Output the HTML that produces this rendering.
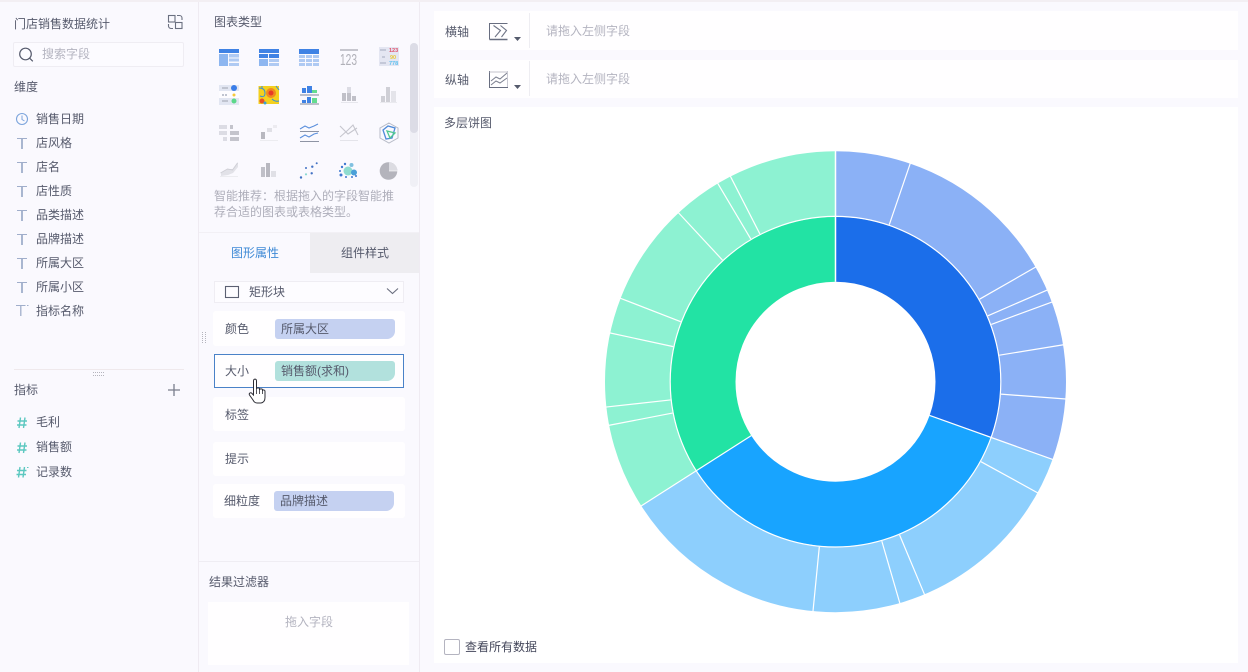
<!DOCTYPE html>
<html lang="zh"><head><meta charset="utf-8"><title>多层饼图</title>
<style>
html,body{margin:0;padding:0}
body{width:1248px;height:672px;position:relative;overflow:hidden;background:#faf9fe;font-family:"Liberation Sans","Noto Sans CJK SC",sans-serif;font-size:12px;color:#565a6c}
div{position:absolute;box-sizing:border-box}
.t{line-height:20px;height:20px;white-space:nowrap}
.w{background:#fffeff}
.g{color:#b4b4c0}
.p{border-radius:3px 3px 8px 3px;height:20px;line-height:20px;padding-left:6px;width:120px;color:#565a6c}
svg{position:absolute;left:0;top:0}
</style></head><body>
<div style="left:0;top:0;width:1248px;height:2px;background:#f3eff3"></div>
<div style="left:198px;top:2px;width:1px;height:670px;background:#efebf2"></div>
<div style="left:419px;top:2px;width:1px;height:670px;background:#efebf2"></div>
<div class="w" style="left:434px;top:11px;width:804px;height:39px"></div>
<div class="w" style="left:434px;top:60px;width:804px;height:38px"></div>
<div style="left:434px;top:107px;width:804px;height:556px;background:#fff"></div>
<div style="left:529px;top:13px;width:1px;height:35px;background:#eeedf2"></div>
<div style="left:529px;top:61px;width:1px;height:35px;background:#eeedf2"></div>
<div style="left:310px;top:233px;width:109px;height:40px;background:#eeedf1"></div>
<div style="left:199px;top:232px;width:220px;height:1px;background:#f2f0f5"></div>
<div style="left:13px;top:42px;width:171px;height:25px;border:1px solid #efedf3;border-radius:2px;background:#fcfbff"></div>
<div style="left:214px;top:281px;width:190px;height:22px;border:1px solid #efedf3;background:#fdfcff"></div>
<div class="w" style="left:213px;top:311px;width:192px;height:35px;border-radius:3px"></div>
<div class="w" style="left:214px;top:354px;width:190px;height:34px;border:1px solid #4a82c8"></div>
<div class="w" style="left:213px;top:397px;width:192px;height:34px;border-radius:3px"></div>
<div class="w" style="left:213px;top:442px;width:192px;height:34px;border-radius:3px"></div>
<div class="w" style="left:213px;top:484px;width:192px;height:34px;border-radius:3px"></div>
<div style="left:199px;top:561px;width:220px;height:1px;background:#efedf3"></div>
<div class="w" style="left:208px;top:602px;width:201px;height:63px"></div>
<div style="left:14px;top:369px;width:170px;height:1px;background:#efe9ec"></div>
<div style="left:410px;top:43px;width:8px;height:144px;border-radius:4px;background:#f0f0f6"></div>
<div style="left:410px;top:43px;width:8px;height:90px;border-radius:4px;background:#dcdce6"></div>

<div class="t" style="left:14px;top:14px">门店销售数据统计</div>
<div class="t g" style="left:42px;top:44px">搜索字段</div>
<div class="t" style="left:14px;top:77px">维度</div>
<div class="t" style="left:36px;top:109px">销售日期</div>
<div class="t" style="left:36px;top:133px">店风格</div>
<div class="t" style="left:36px;top:157px">店名</div>
<div class="t" style="left:36px;top:181px">店性质</div>
<div class="t" style="left:36px;top:205px">品类描述</div>
<div class="t" style="left:36px;top:229px">品牌描述</div>
<div class="t" style="left:36px;top:253px">所属大区</div>
<div class="t" style="left:36px;top:277px">所属小区</div>
<div class="t" style="left:36px;top:301px">指标名称</div>
<div class="t" style="left:14px;top:380px">指标</div>
<div class="t" style="left:36px;top:412px">毛利</div>
<div class="t" style="left:36px;top:437px">销售额</div>
<div class="t" style="left:36px;top:462px">记录数</div>

<div class="t" style="left:214px;top:12px">图表类型</div>
<div class="t g" style="left:214px;top:186px;color:#aeaeba">智能推荐：根据拖入的字段智能推</div>
<div class="t g" style="left:214px;top:202px;color:#aeaeba">荐合适的图表或表格类型。</div>
<div class="t" style="left:231px;top:243px;color:#3f8ad6">图形属性</div>
<div class="t" style="left:341px;top:243px">组件样式</div>
<div class="t" style="left:249px;top:282px">矩形块</div>
<div class="t" style="left:225px;top:319px">颜色</div>
<div class="t p" style="left:275px;top:319px;background:#c5d1f1">所属大区</div>
<div class="t" style="left:225px;top:361px">大小</div>
<div class="t p" style="left:275px;top:361px;background:#b2e1dd">销售额(求和)</div>
<div class="t" style="left:225px;top:405px">标签</div>
<div class="t" style="left:225px;top:449px">提示</div>
<div class="t" style="left:224px;top:491px">细粒度</div>
<div class="t p" style="left:274px;top:491px;background:#c5d1f1">品牌描述</div>
<div class="t" style="left:209px;top:572px">结果过滤器</div>
<div class="t g" style="left:285px;top:612px">拖入字段</div>

<div class="t" style="left:445px;top:22px">横轴</div>
<div class="t g" style="left:546px;top:21px">请拖入左侧字段</div>
<div class="t" style="left:445px;top:70px">纵轴</div>
<div class="t g" style="left:546px;top:69px">请拖入左侧字段</div>
<div class="t" style="left:444px;top:113px">多层饼图</div>
<div style="left:444px;top:639px;width:16px;height:16px;border:1px solid #b4b4c0;border-radius:2px;background:#fff"></div>
<div class="t" style="left:465px;top:637px;color:#43465a">查看所有数据</div>

<svg width="1248" height="672" viewBox="0 0 1248 672">
<!-- sunburst -->
<g transform="translate(835.5 381.7)" fill="none">
<g transform="rotate(-90)">
<circle r="132.5" stroke-width="65" pathLength="360" stroke="#1b6eea" stroke-dasharray="109.7 250.3"/>
<circle r="132.5" stroke-width="65" pathLength="360" stroke="#18a4ff" stroke-dasharray="127.7 232.3" stroke-dashoffset="-109.7"/>
<circle r="132.5" stroke-width="65" pathLength="360" stroke="#22e3a4" stroke-dasharray="122.6 237.4" stroke-dashoffset="-237.4"/>
<circle r="198" stroke-width="65" pathLength="360" stroke="#8bb1f6" stroke-dasharray="109.7 250.3"/>
<circle r="198" stroke-width="65" pathLength="360" stroke="#8dcffd" stroke-dasharray="127.7 232.3" stroke-dashoffset="-109.7"/>
<circle r="198" stroke-width="65" pathLength="360" stroke="#8df2d2" stroke-dasharray="122.6 237.4" stroke-dashoffset="-237.4"/>
</g>
<circle r="165.3" stroke="#fff" stroke-width="1.2"/>
<g stroke="#fff" stroke-width="1.2">
<line y1="-100" y2="-231" stroke-width="1.5"/>
<line y1="-100" y2="-231" transform="rotate(109.7)"/>
<line y1="-100" y2="-231" transform="rotate(237.4)"/>
<line y1="-166" y2="-231" transform="rotate(18.9)"/>
<line y1="-166" y2="-231" transform="rotate(60.2)"/>
<line y1="-166" y2="-231" transform="rotate(66.6)"/>
<line y1="-166" y2="-231" transform="rotate(69.8)"/>
<line y1="-166" y2="-231" transform="rotate(80.8)"/>
<line y1="-166" y2="-231" transform="rotate(94.3)"/>
<line y1="-166" y2="-231" transform="rotate(118.8)"/>
<line y1="-166" y2="-231" transform="rotate(157.3)"/>
<line y1="-166" y2="-231" transform="rotate(163.8)"/>
<line y1="-166" y2="-231" transform="rotate(185.6)"/>
<line y1="-166" y2="-231" transform="rotate(259.1)"/>
<line y1="-166" y2="-231" transform="rotate(263.7)"/>
<line y1="-166" y2="-231" transform="rotate(282.2)"/>
<line y1="-166" y2="-231" transform="rotate(291.2)"/>
<line y1="-166" y2="-231" transform="rotate(317.1)"/>
<line y1="-166" y2="-231" transform="rotate(329.3)"/>
<line y1="-166" y2="-231" transform="rotate(332.9)"/>
</g>
</g>

<!-- left panel icons -->
<g fill="none" stroke="#6b7080" stroke-width="1.1">
<rect x="168.500" y="15.500" width="6.500" height="6.500"/>
<rect x="175.500" y="22.500" width="6.500" height="6"/>
<path d="M177 15.500h2.500a2.500 2.500 0 0 1 2.500 2.500v2M168.500 24v2a2.500 2.500 0 0 0 2.500 2.500h2"/>
<circle cx="25.500" cy="54" r="5.800" stroke="#555a6c" stroke-width="1.2"/>
<path d="M29.800 58.300l3 3" stroke="#555a6c" stroke-width="1.2"/>
</g>
<g fill="none">
<circle cx="22" cy="119" r="5.500" stroke="#7da5dc" stroke-width="1.100"/>
<path d="M22 115.500v4l2.500 1.500" stroke="#7da5dc"/>
</g>
<g fill="none" stroke="#a0aecb">
<g stroke-width="1.100"><path d="M17 138.500h10M17 162.500h10M17 186.500h10M17 210.500h10M17 234.500h10M17 258.500h10M17 282.500h10M16 305.500h9.500M27 305.500h1.500"/></g>
<g stroke-width="1.800"><path d="M22 139v10M22 163v10M22 187v10M22 211v10M22 235v10M22 259v10M22 283v10"/></g>
<path d="M20.800 306v10" stroke-width="1.300"/>
</g>
<g fill="none" stroke="#5cc8c0" stroke-width="1.400">
<path d="M20.500 417.500l-1.500 10.500M25 417.500l-1.500 10.500M17.500 421h9.500M17 425h9.500"/>
<path d="M20.500 442.500l-1.500 10.500M25 442.500l-1.500 10.500M17.500 446h9.500M17 450h9.500"/>
<path d="M20 467l-1.500 10.500M24.500 467l-1.500 10.500M17 470.500h9.500M16.500 474.500h9.500"/>
<path d="M27 467.500h1.500" stroke-width="1"/>
</g>
<path d="M174 384v12M168 390h12" stroke="#7a7e8c" stroke-width="1.300" fill="none"/>
<g fill="#b4b4bc">
<rect x="93" y="372" width="1" height="1"/><rect x="95" y="372" width="1" height="1"/><rect x="97" y="372" width="1" height="1"/><rect x="99" y="372" width="1" height="1"/><rect x="101" y="372" width="1" height="1"/><rect x="103" y="372" width="1" height="1"/>
<rect x="93" y="375" width="1" height="1"/><rect x="95" y="375" width="1" height="1"/><rect x="97" y="375" width="1" height="1"/><rect x="99" y="375" width="1" height="1"/><rect x="101" y="375" width="1" height="1"/><rect x="103" y="375" width="1" height="1"/>
<rect x="202" y="332" width="1" height="1"/><rect x="205" y="332" width="1" height="1"/><rect x="202" y="334" width="1" height="1"/><rect x="205" y="334" width="1" height="1"/><rect x="202" y="336" width="1" height="1"/><rect x="205" y="336" width="1" height="1"/><rect x="202" y="338" width="1" height="1"/><rect x="205" y="338" width="1" height="1"/><rect x="202" y="340" width="1" height="1"/><rect x="205" y="340" width="1" height="1"/><rect x="202" y="342" width="1" height="1"/><rect x="205" y="342" width="1" height="1"/>
</g>

<!-- chart type icons row 1 -->
<rect x="219" y="49" width="20" height="4" fill="#3f82e4"/>
<rect x="219" y="54" width="9" height="12" fill="#8db6f0"/>
<g fill="#afcaf3"><rect x="229" y="54" width="10" height="3.500"/><rect x="229" y="58.500" width="10" height="3"/><rect x="229" y="63" width="10" height="3"/></g>
<rect x="259" y="49" width="20" height="4" fill="#3f82e4"/>
<rect x="259" y="54" width="9" height="4" fill="#3f82e4"/><rect x="269" y="54" width="10" height="4" fill="#3f82e4"/>
<rect x="259" y="59" width="9" height="7" fill="#8db6f0"/>
<g fill="#afcaf3"><rect x="269" y="59" width="10" height="3"/><rect x="269" y="63" width="10" height="3"/></g>
<rect x="299" y="49" width="20" height="5" fill="#3f82e4"/>
<g fill="#afcaf3"><rect x="299" y="55" width="6" height="3"/><rect x="306" y="55" width="6" height="3"/><rect x="313" y="55" width="6" height="3"/><rect x="299" y="59" width="6" height="3"/><rect x="306" y="59" width="6" height="3"/><rect x="313" y="59" width="6" height="3"/><rect x="299" y="63" width="6" height="3"/><rect x="306" y="63" width="6" height="3"/><rect x="313" y="63" width="6" height="3"/></g>
<rect x="340" y="49" width="18" height="2" fill="#c6c6ce"/>
<text x="340" y="65" font-family="Liberation Sans,sans-serif" font-size="16" fill="#b0b0b8" textLength="17" lengthAdjust="spacingAndGlyphs">123</text>
<rect x="379" y="47" width="20" height="19" fill="#e4e6f2"/>
<g font-family="Liberation Sans,sans-serif" font-size="5.500" font-weight="bold">
<text x="389" y="52" fill="#e0506a">123</text><text x="390" y="59" fill="#e8c838">90</text><text x="389" y="65" fill="#5cc0f0">778</text></g>
<g fill="#c4c8d8"><rect x="380" y="49" width="6" height="2"/><rect x="382" y="56" width="3" height="2"/><rect x="380" y="62" width="6" height="2"/></g>

<!-- row 2 -->
<rect x="219" y="85" width="20" height="20" fill="#fdfcff"/>
<rect x="219" y="85" width="20" height="6" fill="#e2e6f2"/><rect x="219" y="98" width="20" height="7" fill="#e2e6f2"/>
<circle cx="234" cy="88" r="3" fill="#3a7de8"/><circle cx="234" cy="95" r="1.500" fill="#f5c83c"/><circle cx="234" cy="101" r="2.500" fill="#5cd88a"/>
<g fill="#c0c4d0"><rect x="222" y="87" width="6" height="2"/><rect x="222" y="94" width="2" height="2"/><rect x="225" y="94" width="2" height="2"/><rect x="222" y="100" width="6" height="2"/></g>
<rect x="258.500" y="86" width="20.500" height="18" fill="#f4d01e"/>
<circle cx="271" cy="93" r="5" fill="#f08a20"/><circle cx="271" cy="93" r="2.500" fill="#e83a28"/>
<circle cx="262" cy="101" r="2.500" fill="#e85028"/>
<path d="M259 88q6 0 6 5t-5 3M272 99q3 3 7 2M262 86v3M276 86l3 4" stroke="#3890d8" stroke-width="1" fill="none"/>
<circle cx="265" cy="103" r="1.500" fill="#3fa0d0"/>
<g fill="#3f82e4"><rect x="302" y="88" width="4" height="5"/><rect x="307" y="86" width="5" height="7" /></g>
<rect x="312" y="90" width="5" height="3" fill="#64dc90"/>
<rect x="300" y="94.500" width="19" height="1" fill="#7e8698"/>
<g fill="#3f82e4"><rect x="302" y="100" width="4" height="3"/><rect x="307" y="97" width="4" height="6"/></g>
<rect x="312" y="98" width="5" height="5" fill="#64dc90"/>
<rect x="300" y="103.500" width="19" height="1" fill="#7e8698"/>
<rect x="347" y="87" width="4" height="14" fill="#dcdce4"/>
<g fill="#c0c0c8"><rect x="342" y="93" width="4" height="8"/><rect x="347" y="93" width="4" height="8"/><rect x="352" y="96" width="4" height="5"/></g>
<rect x="341" y="102" width="17" height="1" fill="#e6e6ec"/>
<g fill="#cfcfd6"><rect x="381" y="96" width="4" height="6"/><rect x="386" y="87" width="4" height="15"/><rect x="391" y="91" width="5" height="11" fill="#e4e4ea"/></g>
<rect x="380" y="102" width="17" height="1" fill="#eaeaef"/>

<!-- row 3 -->
<g fill="#dcdce4"><rect x="219" y="125" width="8" height="4"/><rect x="219" y="131" width="8" height="4"/><rect x="223" y="137" width="4" height="4"/></g>
<g fill="#c4c4cc"><rect x="230" y="125" width="3" height="4"/><rect x="230" y="131" width="9" height="4"/><rect x="230" y="137" width="9" height="4"/></g>
<rect x="261" y="132" width="4" height="7" fill="#b8b8c0"/><rect x="267" y="128" width="5" height="4" fill="#e0e0e6"/><rect x="273" y="125" width="4" height="3" fill="#ecebf0"/>
<rect x="260" y="140" width="18" height="1" fill="#ececf0"/>
<g fill="none" stroke="#5b8fdc" stroke-width="1.100"><path d="M300 129l5-3 4 2 5-2 4-2"/><path d="M300 138l5-3 4 2 5-3 4-1"/></g>
<path d="M300 131.500h19M300 141.500h19" stroke="#8e94a4" stroke-width="1"/>
<g fill="none" stroke="#c6c6ce" stroke-width="1.100"><path d="M340 126l8 8 9-6"/><path d="M340 137l8-7 5-5 5 10"/></g>
<rect x="340" y="140" width="18" height="1" fill="#e4e4ea"/>
<path d="M389 123l9 5v10l-9 5-9-5v-10z" fill="none" stroke="#b8bcc8" stroke-width="1"/>
<path d="M383 130l5-4 7 2-3 10-6 1z" fill="none" stroke="#4f8ad8" stroke-width="1.300"/>
<path d="M387 131l8 2-5 5z" fill="none" stroke="#50c890" stroke-width="1.300"/>

<!-- row 4 -->
<path d="M221 173l7-4 5 0 5-7v5l-5 6-5 2-7 1z" fill="#e2e2e8"/>
<path d="M220.500 173l7-4 5 1 5-7" fill="none" stroke="#cfcfd6" stroke-width="1"/>
<rect x="220" y="176" width="18" height="1" fill="#ececf0"/>
<g><rect x="261" y="167" width="4" height="10" fill="#c0c0c8"/><rect x="266" y="163" width="4" height="14" fill="#b8b8c0"/><rect x="271" y="171" width="5" height="6" fill="#e0e0e6"/></g>
<g fill="#4272c4"><circle cx="301" cy="177.500" r="1.200"/><circle cx="306" cy="168" r="1"/><circle cx="311.700" cy="173.300" r="1.200"/><circle cx="312.300" cy="166.700" r="1.200"/><circle cx="316.700" cy="163.300" r="1"/></g>
<circle cx="306" cy="174.300" r="1.100" fill="#8ad8d0"/>
<circle cx="348" cy="171" r="4.500" fill="#8fdcd0"/><circle cx="354" cy="172.500" r="3" fill="#4aa0d8"/><circle cx="351.500" cy="165" r="2" fill="#80c0e0"/>
<g fill="#3f78d0"><circle cx="342" cy="167" r="1.200"/><circle cx="341" cy="175" r="1.500"/><circle cx="345" cy="164" r="1.200"/><circle cx="346" cy="177" r="1"/><circle cx="352" cy="177" r="1"/><circle cx="356" cy="176" r="1"/><circle cx="340" cy="171" r="1"/></g>
<circle cx="388.500" cy="171" r="8.800" fill="#b4b4bc"/>
<path d="M389 162.500a8.500 8.500 0 0 1 8.500 8.500h-8.500z" fill="#dcdce2"/>
<path d="M389 171h8.500" stroke="#fff" stroke-width=".6"/>

<!-- axis icons -->
<g fill="none" stroke="#686d80" stroke-width="1">
<path d="M489.500 23v16.500M489.500 23.500h18"/>
<path d="M489.500 39.500h18" stroke-width="1.500"/>
<path d="M493.500 25.500l7 5-5.500 6.500M500.500 25.500l6 5-5 6.500" stroke="#6f7486" stroke-width="1.100"/>
<path d="M489.500 71v16.500h18.500"/>
<path d="M489.500 72h18" stroke="#c4c4ce"/>
<path d="M491 81l5-4 4 2 7-6M491 85l5-4 4 2 7-5" stroke="#7c8090"/>
<path d="M507.500 71v16" stroke="#c8c8d2"/>
</g>
<path d="M514 37h7l-3.500 4zM514 85h7l-3.500 4z" fill="#555a6c"/>

<!-- dropdown -->
<rect x="225.500" y="286.500" width="13" height="11" fill="none" stroke="#5c6072" stroke-width="1.100"/>
<path d="M387 288.500l5.500 5 5.500-5" fill="none" stroke="#6a6e7e" stroke-width="1.100"/>

<!-- hand cursor -->
<path d="M253.500 381c0-2.500 3-2.500 3 0v8c0-1.500 3-1.500 3 0v1c0-1.500 3-1.500 3 0v1c0-1.500 2.500-1.500 2.500 .5v6c0 3-1.500 5-4 5.500h-4c-2 0-3-1-4-3l-3.500-5c-1-2 1.500-3 2.500-1.500l1.500 1.500z" fill="#fff" stroke="#2e2e36" stroke-width="1"/>
<path d="M256.500 389v5M259.500 390v4M262.500 391v3" stroke="#2e2e36" stroke-width=".8" fill="none"/>
</svg>
</body></html>
